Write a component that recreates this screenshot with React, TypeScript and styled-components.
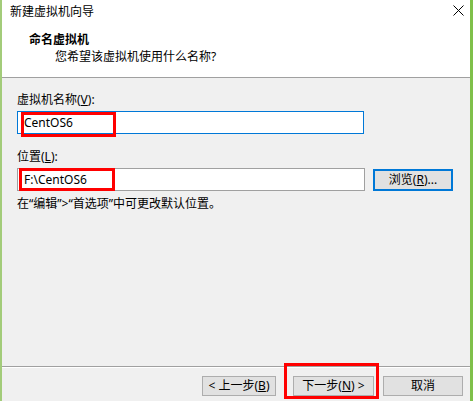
import React from 'react';
import styled, { createGlobalStyle } from 'styled-components';

const GlobalStyle = createGlobalStyle`
body {
    margin: 0;
    background: #ffffff;
    font-family: "Noto Sans", "Noto Sans CJK SC", sans-serif;
    font-size: 12px;
    color: #000000;
}
`;

export const Window = styled.div`
position: relative;
box-sizing: border-box;
width: 473px;
height: 401px;
display: flex;
flex-direction: column;
background: #f0f0f0;
border-left: 2px solid #a3cc7a;
border-right: 3px solid #7fc04a;
overflow: hidden;
`;

export const Top = styled.div`
box-sizing: border-box;
height: 78px;
background: #ffffff;
border-bottom: 1px solid #a0a0a0;
`;

export const TitleBar = styled.div`
height: 24px;
display: flex;
align-items: center;
justify-content: space-between;
padding: 0 6px 0 8px;
line-height: 16px;
`;

export const CloseButton = styled.div`
width: 12px;
height: 12px;
display: flex;
align-items: center;
justify-content: center;
margin-top: -4px;
`;

export const Header = styled.div`
padding: 7px 0 0 27px;
line-height: 17px;
`;

export const HeaderTitle = styled.div`
font-weight: bold;
`;

export const HeaderSub = styled.div`
padding-left: 26px;
`;

export const Content = styled.div`
flex: 1;
padding: 14px 15px 0;
`;

export const Label = styled.div<{ gap?: number }>`
line-height: 16px;
margin-top: ${props => props.gap || 0}px;
`;

export const Row = styled.div`
display: flex;
align-items: center;
gap: 8px;
margin-top: 3px;
`;

export const TextBox = styled.div<{ focused?: boolean; width: number }>`
box-sizing: border-box;
width: ${props => props.width}px;
height: 23px;
background: #ffffff;
border: 1px solid ${props => props.focused ? '#0078d7' : '#a0a0a0'};
padding-left: 6px;
display: flex;
align-items: center;
`;

export const Button = styled.div<{ primary?: boolean; width: number }>`
box-sizing: border-box;
width: ${props => props.width}px;
height: ${props => props.primary ? 22 : 20}px;
background: #e1e1e1;
border: 1px solid ${props => props.primary ? '#0078d7' : '#adadad'};
box-shadow: ${props => props.primary ? 'inset 0 0 0 1px #0078d7' : 'none'};
display: flex;
align-items: center;
justify-content: center;
line-height: 16px;
`;

export const Key = styled.span`
text-decoration: underline;
`;

export const Hint = styled.div`
line-height: 16px;
margin-top: 5px;
`;

export const Footer = styled.div`
box-sizing: border-box;
height: 35px;
border-top: 1px solid #a0a0a0;
box-shadow: inset 0 1px 0 #ffffff;
display: flex;
justify-content: flex-end;
align-items: flex-start;
padding: 9px 7px 0 0;
gap: 9px;
`;

export const BackButton = styled(Button)`
margin-right: 8px;
`;

// red annotation boxes drawn over the screenshot
export const Mark = styled.div<{ x: number; y: number; w: number; h: number }>`
position: absolute;
box-sizing: border-box;
left: ${props => props.x - 2}px;
top: ${props => props.y}px;
width: ${props => props.w}px;
height: ${props => props.h}px;
border: 3px solid #ff0000;
pointer-events: none;
`;

function App() {
    return (
        <>
            <GlobalStyle />
            <Window>
                <Top>
                    <TitleBar>
                        <span>新建虚拟机向导</span>
                        <CloseButton>
                            <svg width="11" height="11" viewBox="0 0 11 11">
                                <path d="M0.5 0.5 L10.5 10.5 M10.5 0.5 L0.5 10.5" stroke="#000" strokeWidth="1" />
                            </svg>
                        </CloseButton>
                    </TitleBar>
                    <Header>
                        <HeaderTitle>命名虚拟机</HeaderTitle>
                        <HeaderSub>您希望该虚拟机使用什么名称?</HeaderSub>
                    </Header>
                </Top>
                <Content>
                    <Label>虚拟机名称(<Key>V</Key>):</Label>
                    <Row>
                        <TextBox focused width={347}>CentOS6</TextBox>
                    </Row>
                    <Label gap={15}>位置(<Key>L</Key>):</Label>
                    <Row>
                        <TextBox width={348}>F:\CentOS6</TextBox>
                        <Button primary width={80}>浏览(<Key>R</Key>)...</Button>
                    </Row>
                    <Hint>在“编辑”&gt;“首选项”中可更改默认位置。</Hint>
                </Content>
                <Footer>
                    <BackButton width={74}>&lt; 上一步(<Key>B</Key>)</BackButton>
                    <Button width={81}>下一步(<Key>N</Key>) &gt;</Button>
                    <Button width={80}>取消</Button>
                </Footer>
                <Mark x={21} y={112} w={95} h={25} />
                <Mark x={19} y={168} w={96} h={23} />
                <Mark x={284} y={363} w={95} h={36} />
            </Window>
        </>
    );
}

export default App;
